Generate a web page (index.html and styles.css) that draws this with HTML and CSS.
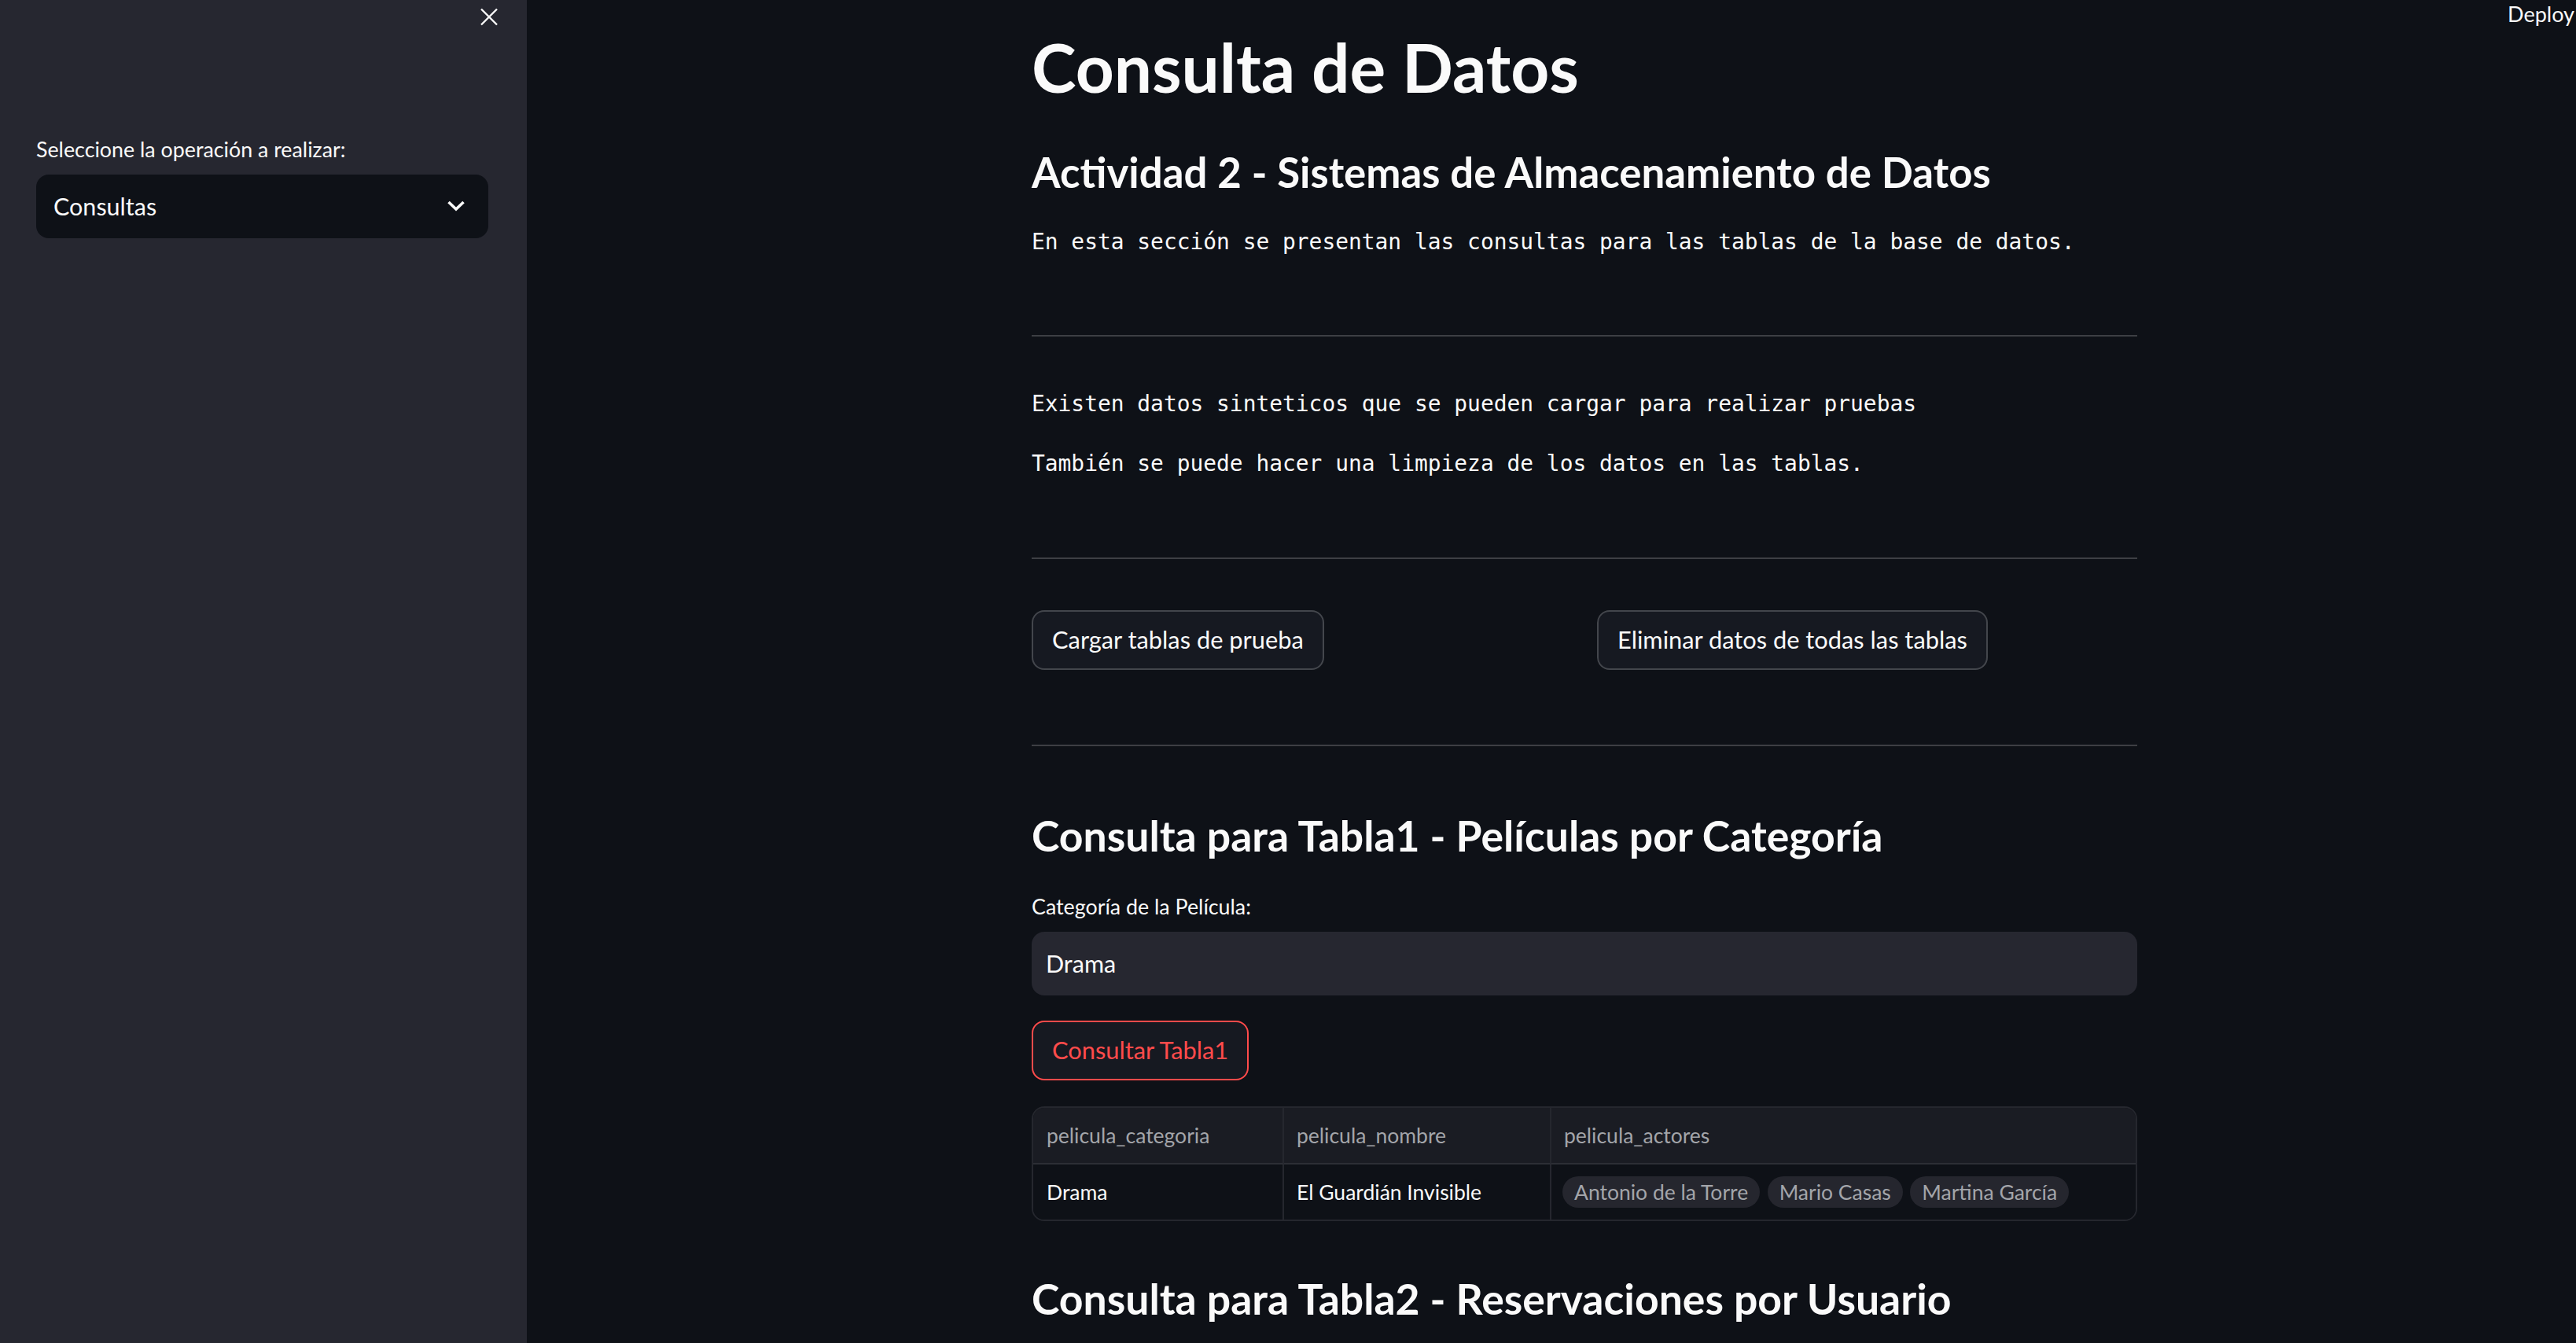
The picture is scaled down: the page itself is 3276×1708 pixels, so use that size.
FILE: index.html
```html
<!DOCTYPE html>
<html lang="es">
<head>
<meta charset="utf-8">
<title>Consulta de Datos</title>
<link rel="stylesheet" href="styles.css">
</head>
<body>
<div class="app">
  <aside class="sidebar">
    <div class="sidebar-header">
      <button class="close-btn" aria-label="Cerrar">
        <svg width="24" height="24" viewBox="0 0 24 24"><path d="M2 1.5 L22 21.5 M22 1.5 L2 21.5" stroke="#fafafa" stroke-width="2.4" fill="none" stroke-linecap="butt"/></svg>
      </button>
    </div>
    <div class="sidebar-content">
      <label class="widget-label side-label">Seleccione la operación a realizar:</label>
      <div class="select">
        <span class="select-value">Consultas</span>
        <svg class="chevron" width="24" height="14" viewBox="0 0 24 14"><path d="M2.5 2 L12 11 L21.5 2" stroke="#fafafa" stroke-width="3.6" fill="none"/></svg>
      </div>
    </div>
  </aside>
  <main class="main">
    <header class="toolbar"><span class="deploy">Deploy</span></header>
    <div class="block">
      <h1 class="title">Consulta de Datos</h1>
      <h3 class="subheader">Actividad 2 - Sistemas de Almacenamiento de Datos</h3>
      <p class="mono intro">En esta sección se presentan las consultas para las tablas de la base de datos.</p>
      <hr class="divider d1">
      <p class="mono m1">Existen datos sinteticos que se pueden cargar para realizar pruebas</p>
      <p class="mono m2">También se puede hacer una limpieza de los datos en las tablas.</p>
      <hr class="divider d2">
      <div class="columns">
        <div class="column"><button class="btn">Cargar tablas de prueba</button></div>
        <div class="column"><button class="btn">Eliminar datos de todas las tablas</button></div>
      </div>
      <hr class="divider d3">
      <h3 class="section-heading s1">Consulta para Tabla1 - Películas por Categoría</h3>
      <label class="widget-label field-label">Categoría de la Película:</label>
      <div class="text-input">Drama</div>
      <button class="btn btn-active">Consultar Tabla1</button>
      <div class="grid">
        <div class="cell head c1">pelicula_categoria</div>
        <div class="cell head c2">pelicula_nombre</div>
        <div class="cell head c3">pelicula_actores</div>
        <div class="cell body c1">Drama</div>
        <div class="cell body c2">El Guardián Invisible</div>
        <div class="cell body c3">
          <span class="pill">Antonio de la Torre</span>
          <span class="pill">Mario Casas</span>
          <span class="pill">Martina García</span>
        </div>
      </div>
      <h3 class="section-heading s2">Consulta para Tabla2 - Reservaciones por Usuario</h3>
    </div>
  </main>
</div>
</body>
</html>
```
FILE: styles.css
```css
* { box-sizing: border-box; }
html, body {
  margin: 0;
  padding: 0;
  width: 3276px;
  height: 1708px;
  overflow: hidden;
  background: #0e1117;
  color: #fafafa;
  font-family: "Lato", "Source Sans Pro", "Noto Sans", sans-serif;
}
.app {
  display: flex;
  height: 1708px;
}
.sidebar {
  width: 670px;
  flex: 0 0 670px;
  background: #262730;
  display: flex;
  flex-direction: column;
}
.sidebar-header {
  height: 44px;
  display: flex;
  justify-content: flex-end;
  align-items: flex-start;
  padding: 10px 36px 0 0;
}
.close-btn {
  background: none;
  border: none;
  padding: 0;
  width: 24px;
  height: 24px;
  display: block;
}
.close-btn svg { display: block; }
.sidebar-content {
  padding: 127.7px 49px 0 46px;
}
.widget-label {
  display: block;
  font-size: 26.8px;
  line-height: 36px;
  color: #fafafa;
}
.select {
  margin-top: 14.3px;
  height: 81px;
  background: #0e1117;
  border-radius: 16px;
  display: flex;
  align-items: center;
  justify-content: space-between;
  padding: 0 29px 0 22px;
}
.select-value {
  font-size: 30.5px;
  line-height: 40px;
}
.chevron { display: block; }
.main {
  flex: 1;
  position: relative;
  padding-left: 642px;
}
.toolbar {
  position: absolute;
  top: 0;
  right: 2px;
}
.deploy {
  font-size: 27px;
  line-height: 36px;
  color: #fafafa;
}
.block {
  width: 1406px;
  padding-top: 35px;
}
.title {
  margin: 0;
  font-size: 85.5px;
  line-height: 100px;
  font-weight: 700;
}
.subheader {
  margin: 52px 0 0;
  font-size: 52.8px;
  line-height: 64px;
  font-weight: 700;
}
.mono {
  margin: 0;
  font-family: "DejaVu Sans Mono", "Liberation Mono", monospace;
  font-size: 27.9px;
  line-height: 44px;
  color: #fafafa;
}
.intro { margin-top: 35.4px; }
.m1 { margin-top: 64.4px; }
.m2 { margin-top: 32px; }
.divider {
  border: none;
  height: 2px;
  margin: 0;
  background: rgba(250, 250, 250, 0.2);
}
.d1 { margin-top: 95.6px; }
.d2 { margin-top: 96.6px; }
.d3 { margin-top: 95px; }
.columns {
  margin-top: 65px;
  display: flex;
  gap: 32px;
}
.column { flex: 1; }
.btn {
  height: 76px;
  padding: 0 24px;
  border: 2px solid rgba(250, 250, 250, 0.2);
  border-radius: 16px;
  background: #161921;
  color: #fafafa;
  font-family: inherit;
  font-size: 30.8px;
  line-height: 40px;
  display: inline-flex;
  align-items: center;
}
.section-heading {
  margin: 0;
  font-size: 53.5px;
  line-height: 64px;
  font-weight: 700;
}
.s1 { margin-top: 81px; }
.s2 { margin-top: 66px; }
.field-label { margin-top: 40.7px; }
.text-input {
  margin-top: 14.3px;
  height: 81px;
  background: #262730;
  border-radius: 16px;
  padding: 0 18px;
  font-size: 30.5px;
  line-height: 81px;
}
.btn-active {
  margin-top: 32px;
  border-color: #ff4b4b;
  color: #ff4b4b;
}
.grid {
  margin-top: 33px;
  display: grid;
  grid-template-columns: 319px 340px 1fr;
  grid-template-rows: 72px 70px;
  border: 2px solid #25272e;
  border-radius: 16px;
  overflow: hidden;
}
.cell {
  display: flex;
  align-items: center;
  padding: 0 16px;
  font-size: 26.5px;
  border-right: 2px solid #25272e;
}
.cell.c3 { border-right: none; }
.head {
  background: #1a1c23;
  color: #a3a5aa;
  border-bottom: 2px solid #2c2e35;
}
.body {
  background: #0e1117;
  color: #fafafa;
}
.cell.c1 { padding-left: 17px; }
.body.c3 { gap: 9.5px; padding-left: 14px; }
.pill {
  height: 40px;
  padding: 0 15px;
  border-radius: 20px;
  background: #25262e;
  color: #a3a5aa;
  font-size: 26.5px;
  line-height: 40px;
  white-space: nowrap;
}
```
